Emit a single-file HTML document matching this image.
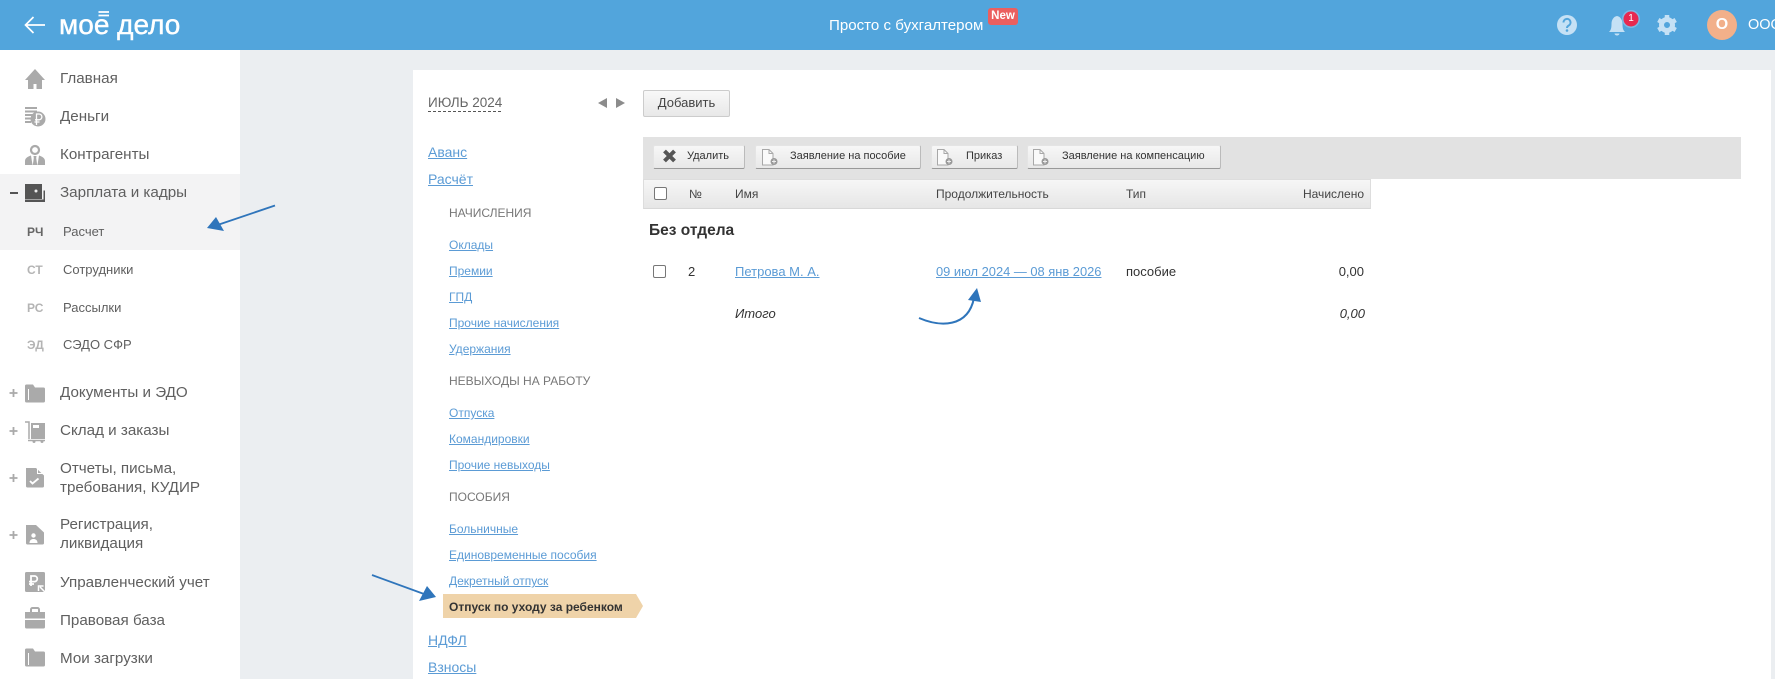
<!DOCTYPE html>
<html lang="ru"><head><meta charset="utf-8"><title>Моё дело</title>
<style>
html,body{margin:0;padding:0}
body{width:1775px;height:679px;overflow:hidden;position:relative;background:#ebeef1;font-family:"Liberation Sans",sans-serif;color:#333}
.a{position:absolute;white-space:nowrap;line-height:20px}
.box{position:absolute}
.s{left:60px;font-size:15.2px;color:#5f5f5f}
.sub{left:63px;font-size:13px;color:#5f5f5f}
.ab{left:27px;font-size:12px;font-weight:bold;color:#b4b4b4}
a{color:#5b9bd5;text-decoration:underline}
.m{left:428px;font-size:14px}
.l{left:449px;font-size:12px}
.h{left:449px;font-size:12px;color:#777}
.btn{position:absolute;top:145px;height:24px;box-sizing:border-box;background:linear-gradient(#f7f7f7,#e8e8e8);border:1px solid #e4e4e4;border-bottom:1px solid #999;border-right:1px solid #bbb;border-radius:2px}
.bt{font-size:11px;color:#333}
.th{font-size:12px;color:#444}
.td{font-size:13px;color:#333}
.cb{position:absolute;width:11px;height:11px;border:1px solid #777;border-radius:2px;background:#fff}
svg{position:absolute;left:0;top:0}
</style></head><body>
<div class="box" style="left:0;top:0;width:1775px;height:50px;background:#52a5dc"></div>
<div class="box" style="left:0;top:50px;width:240px;height:629px;background:#fff"></div>
<div class="box" style="left:0;top:174px;width:240px;height:76px;background:#f3f3f4"></div>
<div class="box" style="left:413px;top:70px;width:1358px;height:609px;background:#fff"></div>
<div class="box" style="left:643px;top:137px;width:1098px;height:42px;background:#e2e2e2"></div>
<div class="box" style="left:643px;top:179px;width:728px;height:30px;box-sizing:border-box;background:linear-gradient(#f6f6f6,#e6e6e6);border:1px solid #ddd;border-bottom:1px solid #d8d8d8"></div>
<div class="box" style="left:643px;top:90px;width:87px;height:27px;box-sizing:border-box;background:linear-gradient(#f8f8f8,#e8e8e8);border:1px solid #ccc;border-radius:2px"></div>
<div class="box" style="left:443px;top:594px;width:200px;height:24px;background:#efd3a9;clip-path:polygon(0 0,193px 0,200px 12px,193px 24px,0 24px)"></div>

<svg width="1775" height="679" viewBox="0 0 1775 679" fill="none">
<!-- back arrow -->
<path d="M45 25H26M33.500 17L25.500 25L33.500 33" stroke="#fff" stroke-width="1.700"/>
<!-- logo bars -->
<path d="M98.500 12h10.500M98.500 15.500h10.500" stroke="#fff" stroke-width="1.800"/>
<!-- question -->
<circle cx="1567" cy="25" r="10" fill="#c5e1f5"/>
<path d="M1563.500 22.500a3.500 3.500 0 1 1 5.200 3c-1.200.7-1.700 1.200-1.700 2.500" stroke="#52a5dc" stroke-width="2"/>
<circle cx="1567" cy="30.500" r="1.300" fill="#52a5dc"/>
<!-- bell -->
<path d="M1609 32c2-2 2.500-4 2.500-8 0-4 2-7.500 5.500-8 3.500.5 5.500 4 5.500 8 0 4 .5 6 2.500 8z" fill="#c5e1f5"/>
<path d="M1614.500 33.500h5a2.500 2 0 0 1-5 0z" fill="#c5e1f5"/>
<circle cx="1631" cy="19" r="9" fill="#7db8e4"/>
<circle cx="1631" cy="19" r="7.500" fill="#e8284f"/>
<!-- gear -->
<circle cx="1667" cy="25" r="5.500" stroke="#c5e1f5" stroke-width="5"/>
<path d="M1667 15v4M1667 31v4M1658.300 20l3.500 2M1672.200 28l3.500 2M1658.300 30l3.500-2M1672.200 22l3.500-2" stroke="#c5e1f5" stroke-width="4.500"/>
<circle cx="1722" cy="25" r="15" fill="#f2b08a"/>
<!-- home -->
<path d="M35 69L25 80h3v9h5.500v-5h3v5H42v-9h3z" fill="#aaa"/>
<!-- money -->
<path d="M25 107h12v2H25zM25 110.500h12v2H25zM25 114h8v2h-8zM25 117.500h6v2h-6zM25 121h6v2h-6z" fill="#aaa"/>
<circle cx="38" cy="119" r="7.500" fill="#aaa"/>
<path d="M36.500 125v-11h2.500a2.800 2.800 0 0 1 0 5.800h-4M34.500 122h5" stroke="#fff" stroke-width="1.300"/>
<!-- person -->
<circle cx="35" cy="150" r="4" stroke="#aaa" stroke-width="2.200"/>
<path d="M25 165v-4c0-3 3-4.500 6-5.500l1.500 9.500zM45 165v-4c0-3-3-4.500-6-5.500L37.500 165z" fill="#aaa"/>
<path d="M33.500 156h3l-.3 2 1 7h-4.400l1-7z" fill="#aaa"/>
<!-- wallet -->
<rect x="25" y="184" width="17" height="15" fill="#555"/>
<path d="M25 199.500h18.500V190.500h1.500V202H25z" fill="#555"/>
<circle cx="36" cy="191" r="1.500" fill="#eee"/>
<path d="M10 193h8" stroke="#555" stroke-width="2"/>
<!-- folder docs -->
<path d="M25 386a1.500 1.500 0 0 1 1.500-1.500H33l2 3h8.500a1.500 1.500 0 0 1 1.500 1.500v12a1.500 1.500 0 0 1-1.500 1.500h-17A1.500 1.500 0 0 1 25 401z" fill="#aaa"/>
<path d="M28.500 389v11" stroke="#fff" stroke-width="1"/>
<path d="M9.500 393h8M13.500 389v8M9.500 431h8M13.500 427v8M9.500 478h8M13.500 474v8M9.500 535h8M13.500 531v8" stroke="#aaa" stroke-width="1.800"/>
<!-- cart -->
<path d="M25 422h4v17" stroke="#aaa" stroke-width="1.500"/>
<path d="M31 423h14v16H31z" fill="#aaa"/>
<path d="M33 425h6v3h-6z" fill="#fff"/>
<path d="M28 440.500h17" stroke="#aaa" stroke-width="1.500"/>
<circle cx="34" cy="441.500" r="1.500" fill="#aaa"/><circle cx="42" cy="441.500" r="1.500" fill="#aaa"/>
<!-- report doc -->
<path d="M26 468h10l8 7.500V486a1.500 1.500 0 0 1-1.500 1.500h-15A1.500 1.500 0 0 1 26 486z" fill="#aaa"/>
<path d="M30 481l2.500 2.500 6-5" stroke="#fff" stroke-width="1.800"/>
<path d="M37.500 467.500v6h6" stroke="#fff" stroke-width="1"/>
<!-- reg doc -->
<path d="M26 525h10l8 7.500V543a1.500 1.500 0 0 1-1.500 1.500h-15A1.500 1.500 0 0 1 26 543z" fill="#aaa"/>
<circle cx="33.500" cy="535.500" r="2.200" fill="#fff"/>
<path d="M29.500 543c0-3 2-4 4-4s4 1 4 4z" fill="#fff"/>
<!-- upr -->
<rect x="25" y="572" width="20" height="20" rx="1.500" fill="#aaa"/>
<path d="M31 586v-10h3.500a2.800 2.800 0 0 1 0 5.600H29M29 584h5" stroke="#fff" stroke-width="1.800"/>
<path d="M45 592l-5-5M38.500 591v-5h5" stroke="#fff" stroke-width="1.500"/>
<!-- brief -->
<path d="M31 612v-2.500a1.500 1.500 0 0 1 1.500-1.500h5a1.500 1.500 0 0 1 1.500 1.500v2.500" stroke="#aaa" stroke-width="2"/>
<path d="M25 612h20v6.500H25zM25 620h20v7a1.500 1.500 0 0 1-1.500 1.500h-17A1.500 1.500 0 0 1 25 627z" fill="#aaa"/>
<!-- my folder -->
<path d="M25 650a1.500 1.500 0 0 1 1.500-1.500H33l2 3h8.500a1.500 1.500 0 0 1 1.500 1.500v12a1.500 1.500 0 0 1-1.500 1.500h-17A1.500 1.500 0 0 1 25 665z" fill="#aaa"/>
<path d="M28.500 653v12" stroke="#fff" stroke-width="1"/>
<!-- prev/next -->
<path d="M607 98v10l-9-5zM616 98v10l9-5z" fill="#8c8c8c"/>
<!-- dashed -->
<path d="M428 111.500h75" stroke="#555" stroke-dasharray="3 2" stroke-width="1"/>
<!-- blue arrows -->
<path d="M275 205.500L219 224.500" stroke="#2f75bb" stroke-width="1.800"/>
<path d="M207 228L216 217L224 231z" fill="#2f75bb"/>
<path d="M372 575L424 594" stroke="#2f75bb" stroke-width="1.800"/>
<path d="M436 597L419 601L427 586z" fill="#2f75bb"/>
<path d="M919 318C940 327 968 328 974 298" stroke="#2f75bb" stroke-width="2"/>
<path d="M977 288L981 302L968 300z" fill="#2f75bb"/>
</svg>

<div class="a" style="left:59px;top:8px;font-size:28px;line-height:34px;color:#fff;-webkit-text-stroke:.4px #fff">моe дело</div>
<div class="a" style="left:829px;top:16px;font-size:15.100px;color:#fff">Просто с бухгалтером</div>
<div class="box" style="left:988px;top:8px;width:30px;height:17px;background:#eb5f5f;border-radius:3px;color:#fff;font-size:11.500px;font-weight:bold;line-height:17px;text-align:center">New</div>
<div class="a" style="left:1631px;top:9px;width:0;font-size:10px;color:#fff;display:flex;justify-content:center">1</div>
<div class="a" style="left:1722px;top:15px;width:0;font-size:16px;font-weight:bold;color:#fff;display:flex;justify-content:center">О</div>
<div class="a" style="left:1748px;top:15px;font-size:14.500px;color:#fff">ООО</div>

<div class="a s" style="top:69px">Главная</div>
<div class="a s" style="top:107px">Деньги</div>
<div class="a s" style="top:145px">Контрагенты</div>
<div class="a s" style="top:183px">Зарплата и кадры</div>
<div class="a ab" style="top:222px;color:#666">РЧ</div><div class="a sub" style="top:222px">Расчет</div>
<div class="a ab" style="top:260px">СТ</div><div class="a sub" style="top:260px">Сотрудники</div>
<div class="a ab" style="top:298px">РС</div><div class="a sub" style="top:298px">Рассылки</div>
<div class="a ab" style="top:335px">ЭД</div><div class="a sub" style="top:335px">СЭДО СФР</div>
<div class="a s" style="top:383px">Документы и ЭДО</div>
<div class="a s" style="top:421px">Склад и заказы</div>
<div class="a s" style="top:459px">Отчеты, письма,</div>
<div class="a s" style="top:478px">требования, КУДИР</div>
<div class="a s" style="top:515px">Регистрация,</div>
<div class="a s" style="top:534px">ликвидация</div>
<div class="a s" style="top:573px">Управленческий учет</div>
<div class="a s" style="top:611px">Правовая база</div>
<div class="a s" style="top:649px">Мои загрузки</div>

<div class="a" style="left:428px;top:93px;font-size:13.500px;color:#666">ИЮЛЬ 2024</div>
<div class="a" style="left:643px;top:93px;width:87px;text-align:center;font-size:13px;color:#444">Добавить</div>
<a class="a m" style="top:142px">Аванс</a>
<a class="a m" style="top:169px">Расчёт</a>
<div class="a h" style="top:203px">НАЧИСЛЕНИЯ</div>
<a class="a l" style="top:235px">Оклады</a>
<a class="a l" style="top:261px">Премии</a>
<a class="a l" style="top:287px">ГПД</a>
<a class="a l" style="top:313px">Прочие начисления</a>
<a class="a l" style="top:339px">Удержания</a>
<div class="a h" style="top:371px">НЕВЫХОДЫ НА РАБОТУ</div>
<a class="a l" style="top:403px">Отпуска</a>
<a class="a l" style="top:429px">Командировки</a>
<a class="a l" style="top:455px">Прочие невыходы</a>
<div class="a h" style="top:487px">ПОСОБИЯ</div>
<a class="a l" style="top:519px">Больничные</a>
<a class="a l" style="top:545px">Единовременные пособия</a>
<a class="a l" style="top:571px">Декретный отпуск</a>
<div class="a" style="left:449px;top:597px;font-size:12px;font-weight:bold;color:#333">Отпуск по уходу за ребенком</div>
<a class="a m" style="top:630px">НДФЛ</a>
<a class="a m" style="top:657px">Взносы</a>

<div class="btn" style="left:653px;width:92px"></div>
<div class="btn" style="left:755px;width:166px"></div>
<div class="btn" style="left:931px;width:87px"></div>
<div class="btn" style="left:1027px;width:194px"></div>
<svg width="1775" height="679" viewBox="0 0 1775 679" fill="none">
<path d="M664.500 151l10 10M674.500 151l-10 10" stroke="#555" stroke-width="4"/>
<g><path d="M762.500 149.500h6.500l4 4v11.500h-10.500z" fill="#fafafa" stroke="#a8a8a8"/><path d="M769 149.500v4h4" stroke="#a8a8a8"/><circle cx="774" cy="161.500" r="3.500" fill="#999"/><path d="M772 161.500h4M774 159.500v4" stroke="#eee"/></g>
<g transform="translate(175 0)"><path d="M762.500 149.500h6.500l4 4v11.500h-10.500z" fill="#fafafa" stroke="#a8a8a8"/><path d="M769 149.500v4h4" stroke="#a8a8a8"/><circle cx="774" cy="161.500" r="3.500" fill="#999"/><path d="M772 161.500h4M774 159.500v4" stroke="#eee"/></g>
<g transform="translate(271 0)"><path d="M762.500 149.500h6.500l4 4v11.500h-10.500z" fill="#fafafa" stroke="#a8a8a8"/><path d="M769 149.500v4h4" stroke="#a8a8a8"/><circle cx="774" cy="161.500" r="3.500" fill="#999"/><path d="M772 161.500h4M774 159.500v4" stroke="#eee"/></g>
</svg>
<div class="a bt" style="left:687px;top:146px">Удалить</div>
<div class="a bt" style="left:790px;top:146px">Заявление на пособие</div>
<div class="a bt" style="left:966px;top:146px">Приказ</div>
<div class="a bt" style="left:1062px;top:146px">Заявление на компенсацию</div>

<div class="cb" style="left:654px;top:187px"></div>
<div class="a th" style="left:689px;top:184px">№</div>
<div class="a th" style="left:735px;top:184px">Имя</div>
<div class="a th" style="left:936px;top:184px">Продолжительность</div>
<div class="a th" style="left:1126px;top:184px">Тип</div>
<div class="a th" style="left:1265px;top:184px;width:99px;text-align:right">Начислено</div>
<div class="a" style="left:649px;top:221px;font-size:15.500px;font-weight:bold;color:#333">Без отдела</div>
<div class="cb" style="left:653px;top:265px"></div>
<div class="a td" style="left:688px;top:262px">2</div>
<a class="a td" style="left:735px;top:262px;color:#5b9bd5">Петрова М. А.</a>
<a class="a td" style="left:936px;top:262px;font-size:12.900px;color:#5b9bd5">09 июл 2024 — 08 янв 2026</a>
<div class="a td" style="left:1126px;top:262px">пособие</div>
<div class="a td" style="left:1265px;top:262px;width:99px;text-align:right">0,00</div>
<div class="a td" style="left:735px;top:304px;font-style:italic">Итого</div>
<div class="a td" style="left:1265px;top:304px;width:100px;text-align:right;font-style:italic">0,00</div>
</body></html>
